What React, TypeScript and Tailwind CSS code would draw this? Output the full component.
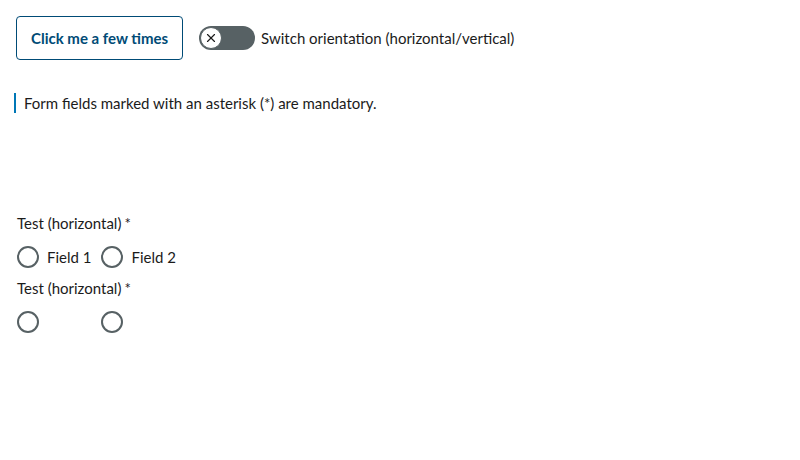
import { X } from 'lucide-react';

function Radio({ label, hideLabel }: { label: string; hideLabel?: boolean }) {
  return (
    <label className="flex items-center gap-2">
      <span className="w-[22px] h-[22px] rounded-full border-2 border-[#576164] bg-white" />
      <span className={hideLabel ? 'invisible' : ''}>{label}</span>
    </label>
  );
}

function Group({ hideLabels }: { hideLabels?: boolean }) {
  return (
    <fieldset className="flex flex-col">
      <legend className="leading-[20px] mb-[13px]">
        Test (horizontal)<span className="ml-[3px]">*</span>
      </legend>
      <div className="flex items-center gap-[10px] h-[22px]">
        <Radio label="Field 1" hideLabel={hideLabels} />
        <Radio label="Field 2" hideLabel={hideLabels} />
      </div>
    </fieldset>
  );
}

export default function App() {
  return (
    <div className="w-[800px] h-[460px] bg-white text-[#1b1b1b] font-['Lato','Liberation_Sans',sans-serif] text-[15px]">
      <div className="pt-4 pl-4 flex items-center">
        <button className="h-[44px] px-[14px] rounded-[4px] border border-[#004b76] text-[#004b76] font-bold">
          Click me a few times
        </button>
        <div className="ml-4 flex items-center gap-[6px]">
          <span className="w-[56px] h-[24px] rounded-full bg-[#576164] flex items-center p-[1px]">
            <span className="w-[22px] h-[22px] rounded-full bg-white border border-[#576164] flex items-center justify-center">
              <X className="w-[14px] h-[14px] text-[#1b1b1b]" strokeWidth={2} />
            </span>
          </span>
          <span>Switch orientation (horizontal/vertical)</span>
        </div>
      </div>
      <div className="mt-[33px] ml-[14px] flex items-center h-[20px]">
        <span className="w-[2px] h-[20px] bg-[#0077b6]" />
        <span className="ml-[8px]">Form fields marked with an asterisk (*) are mandatory.</span>
      </div>
      <div className="mt-[100px] ml-[17px] flex flex-col gap-[10px]">
        <Group />
        <Group hideLabels />
      </div>
    </div>
  );
}
